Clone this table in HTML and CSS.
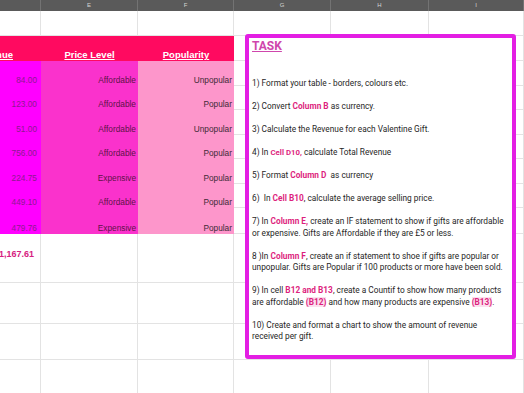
FILE: index.html
```html
<!DOCTYPE html>
<html>
<head>
<meta charset="utf-8">
<link rel="stylesheet" href="styles.css">
</head>
<body>
<div class="sheet">
  <div class="colbar">
    <div class="ch c-d"></div>
    <div class="ch c-e">E</div>
    <div class="ch c-f">F</div>
    <div class="ch c-g">G</div>
    <div class="ch c-h">H</div>
    <div class="ch c-i">I</div>
  </div>
  <div class="grid">
    <!-- row 1 blank -->
    <div class="cell"></div><div class="cell"></div><div class="cell"></div><div class="cell"></div><div class="cell"></div><div class="cell last"></div>
    <!-- header -->
    <div class="cell hd right-ov"><span class="hdt">Revenue</span></div>
    <div class="cell hd"><span class="hdt">Price Level</span></div>
    <div class="cell hd"><span class="hdt">Popularity</span></div>
    <div class="cell"></div><div class="cell"></div><div class="cell last"></div>
    <!-- data rows -->
    <div class="cell cd">84.00</div><div class="cell ce">Affordable</div><div class="cell cf">Unpopular</div><div class="cell"></div><div class="cell"></div><div class="cell last"></div>
    <div class="cell cd">123.00</div><div class="cell ce">Affordable</div><div class="cell cf">Popular</div><div class="cell"></div><div class="cell"></div><div class="cell last"></div>
    <div class="cell cd">51.00</div><div class="cell ce">Affordable</div><div class="cell cf">Unpopular</div><div class="cell"></div><div class="cell"></div><div class="cell last"></div>
    <div class="cell cd">756.00</div><div class="cell ce">Affordable</div><div class="cell cf">Popular</div><div class="cell"></div><div class="cell"></div><div class="cell last"></div>
    <div class="cell cd">224.75</div><div class="cell ce">Expensive</div><div class="cell cf">Popular</div><div class="cell"></div><div class="cell"></div><div class="cell last"></div>
    <div class="cell cd">449.10</div><div class="cell ce">Affordable</div><div class="cell cf">Popular</div><div class="cell"></div><div class="cell"></div><div class="cell last"></div>
    <div class="cell cd">479.76</div><div class="cell ce">Expensive</div><div class="cell cf">Popular</div><div class="cell"></div><div class="cell"></div><div class="cell last"></div>
    <!-- total -->
    <div class="cell total">£1,167.61</div><div class="cell"></div><div class="cell"></div><div class="cell"></div><div class="cell"></div><div class="cell last"></div>
    <!-- blanks -->
    <div class="cell"></div><div class="cell"></div><div class="cell"></div><div class="cell"></div><div class="cell"></div><div class="cell last"></div>
    <div class="cell"></div><div class="cell"></div><div class="cell"></div><div class="cell"></div><div class="cell"></div><div class="cell last"></div>
    <div class="cell"></div><div class="cell"></div><div class="cell"></div><div class="cell"></div><div class="cell"></div><div class="cell last"></div>
  </div>

  <div class="task">
    <div class="task-title">TASK</div>
    <p>1) Format your table - borders, colours etc.</p>
    <p>2) Convert <b>Column B</b> as currency.</p>
    <p>3) Calculate the Revenue for each Valentine Gift.</p>
    <p>4) In <b class="sm">Cell D10,</b> calculate Total Revenue</p>
    <p>5) Format <b>Column D</b>&nbsp; as currency</p>
    <p>6)&nbsp; In <b>Cell B10</b>, calculate the average selling price.</p>
    <p>7) In <b>Column E,</b> create an IF statement to show if gifts are affordable<br>or expensive. Gifts are Affordable if they are £5 or less.</p>
    <p>8 )In <b>Column F</b>, create an if statement to shoe if gifts are popular or<br>unpopular. Gifts are Popular if 100 products or more have been sold.</p>
    <p>9) In cell <b>B12 and B13</b>, create a Countif to show how many products<br>are affordable <b class="hl">(B12)</b> and how many products are expensive <b class="hl">(B13)</b>.</p>
    <p>10) Create and format a chart to show the amount of revenue<br>received per gift.</p>
  </div>
</div>
</body>
</html>
```

FILE: styles.css
```css
html, body {
  margin: 0;
  padding: 0;
  background: #ffffff;
}

.sheet {
  position: relative;
  width: 524px;
  height: 393px;
  overflow: hidden;
  font-family: "Liberation Sans", Arial, sans-serif;
}

.colbar {
  display: grid;
  grid-template-columns: 41px 97px 96px 97px 98px 1fr;
  height: 11px;
  background: #5a5a5a;
}

.ch {
  border-right: 1px solid #737373;
  color: #d4d4d4;
  font-size: 6px;
  line-height: 11px;
  text-align: center;
}

.grid {
  display: grid;
  grid-template-columns: 41px 97px 96px 97px 98px 1fr;
  grid-template-rows: 25px 25px 25px 24px 25px 24px 25px 24px 26px 49px 41px 36px 40px;
}

.cell {
  box-sizing: border-box;
  border-right: 1px solid #e3e3e3;
  border-bottom: 1px solid #e3e3e3;
  display: flex;
  align-items: flex-end;
  justify-content: flex-end;
  padding: 0 2px 1px 2px;
  font-size: 8.3px;
  white-space: nowrap;
  overflow: hidden;
}

.hd {
  background: #ff0a60;
  border: none;
  justify-content: center;
  padding-bottom: 1px;
}

.hd.right-ov {
  justify-content: flex-end;
  padding-right: 28px;
}

.hdt {
  color: #ffffff;
  font-weight: bold;
  font-size: 9.5px;
  text-decoration: underline;
}

.cd {
  background: #ff00ff;
  color: #8c1a90;
  border: none;
  padding-right: 4px;
}

.ce {
  background: #fa32cc;
  color: #5e1248;
  border: none;
}

.cf {
  background: #fd96cb;
  color: #3e2a36;
  border: none;
}

.total {
  align-items: center;
  padding-bottom: 8px;
  padding-right: 6px;
  color: #d62080;
  font-weight: bold;
  font-size: 9px;
}

.task {
  position: absolute;
  left: 245px;
  top: 34px;
  width: 271px;
  height: 325px;
  box-sizing: border-box;
  border: 4px solid #e31ee3;
  border-radius: 3px;
  background: #ffffff;
  padding: 1px 2px 0 3px;
  font-family: Roboto, "Liberation Sans", sans-serif;
  font-size: 8.3px;
  color: #262626;
  white-space: nowrap;
}

.task-title {
  font-weight: bold;
  font-size: 12px;
  line-height: 15px;
  color: #cf46ac;
  text-decoration: underline;
  margin-bottom: 24px;
}

.task p {
  margin: 0 0 11.5px 0;
  line-height: 11.5px;
}

.task b {
  color: #dd1f7e;
  font-weight: bold;
}

.task b.sm {
  font-size: 7.8px;
}

.task b.hl {
  background: #fbe0ee;
}
```
